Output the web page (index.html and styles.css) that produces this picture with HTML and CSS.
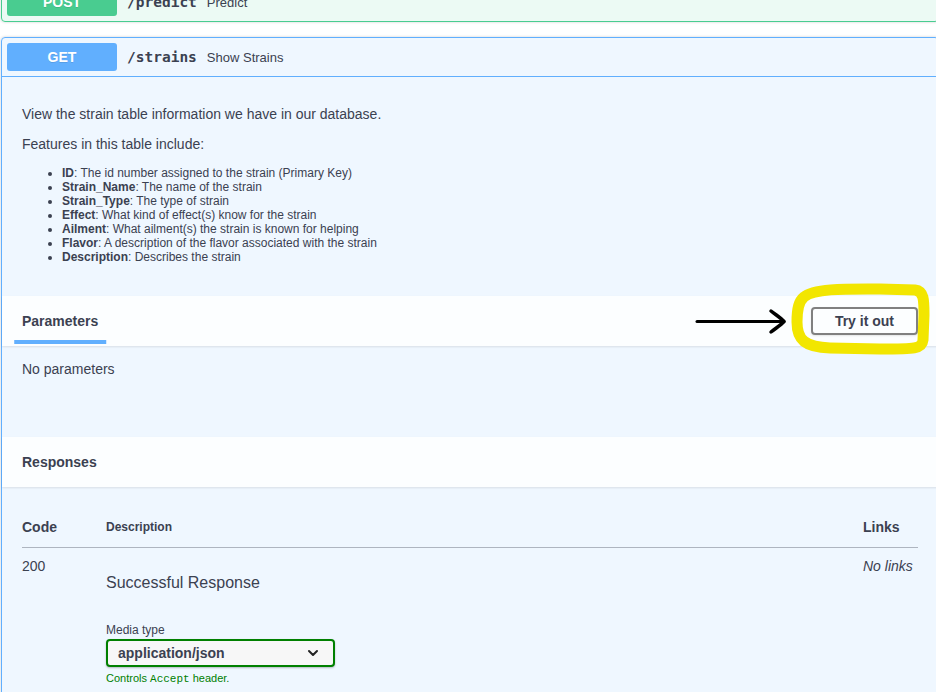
FILE: index.html
```html
<!DOCTYPE html>
<html lang="en">
<head>
<meta charset="utf-8">
<title>Swagger UI</title>
<link rel="stylesheet" href="styles.css">
</head>
<body>
<div class="page">
  <div class="opblock opblock-post">
    <div class="summary">
      <span class="method method-post">POST</span>
      <span class="path">/predict</span>
      <span class="summary-desc">Predict</span>
    </div>
  </div>

  <div class="opblock opblock-get">
    <div class="summary">
      <span class="method method-get">GET</span>
      <span class="path">/strains</span>
      <span class="summary-desc">Show Strains</span>
    </div>

    <div class="description">
      <p>View the strain table information we have in our database.</p>
      <p>Features in this table include:</p>
      <ul>
        <li><strong>ID</strong>: The id number assigned to the strain (Primary Key)</li>
        <li><strong>Strain_Name</strong>: The name of the strain</li>
        <li><strong>Strain_Type</strong>: The type of strain</li>
        <li><strong>Effect</strong>: What kind of effect(s) know for the strain</li>
        <li><strong>Ailment</strong>: What ailment(s) the strain is known for helping</li>
        <li><strong>Flavor</strong>: A description of the flavor associated with the strain</li>
        <li><strong>Description</strong>: Describes the strain</li>
      </ul>
    </div>

    <div class="section-header">
      <h4 class="tab-title"><span>Parameters</span></h4>
      <button class="try-out">Try it out</button>
      <svg class="annotation" width="246" height="80" viewBox="0 0 246 80" aria-hidden="true">
        <path d="M114,17 C124,8 160,9 190,9 L225,10 C234,11 234,20 234,35 L233,60 C232,69 225,69 190,69 L140,68 C115,67 107,60 107,42 C107,28 109,21 114,17 Z" fill="none" stroke="#f2e600" stroke-width="11" stroke-linejoin="round" stroke-linecap="round"/>
        <path d="M7,41.5 L94,41.5" fill="none" stroke="#000" stroke-width="3" stroke-linecap="round"/>
        <path d="M81,31 C86,35 91,38 94,41.5 C91,45 86,48 81,52" fill="none" stroke="#000" stroke-width="3.5" stroke-linecap="round" stroke-linejoin="round"/>
      </svg>
    </div>

    <div class="params-body">
      <p>No parameters</p>
    </div>

    <div class="section-header">
      <h4 class="section-title">Responses</h4>
    </div>

    <div class="responses-inner">
      <table class="responses-table">
        <thead>
          <tr>
            <td class="col-code head-big">Code</td>
            <td class="col-desc head-small">Description</td>
            <td class="col-links head-big">Links</td>
          </tr>
        </thead>
        <tbody>
          <tr>
            <td class="col-code status">200</td>
            <td class="col-desc">
              <p class="resp-text">Successful Response</p>
              <div class="media-label">Media type</div>
              <div class="select">
                <span>application/json</span>
                <svg width="12" height="8" viewBox="0 0 12 8" aria-hidden="true"><path d="M2,2 L6,6 L10,2" fill="none" stroke="#222" stroke-width="2" stroke-linecap="round" stroke-linejoin="round"/></svg>
              </div>
              <div class="accept-msg">Controls <code>Accept</code> header.</div>
            </td>
            <td class="col-links no-links">No links</td>
          </tr>
        </tbody>
      </table>
    </div>
  </div>
</div>
</body>
</html>
```

FILE: styles.css
```css
html, body {
  margin: 0;
  padding: 0;
  background: #fff;
  overflow: hidden;
}

body {
  font-family: "Liberation Sans", Arial, sans-serif;
  color: #3b4151;
}

.page {
  margin-top: -18px;
  padding-left: 1px;
}

.opblock {
  width: 938px;
  box-sizing: border-box;
  border: 1px solid;
  border-radius: 4px;
  box-shadow: 0 0 3px rgba(0, 0, 0, 0.19);
  margin-bottom: 15px;
}

.opblock-post {
  background: rgba(73, 204, 144, 0.1);
  border-color: #49cc90;
}

.opblock-get {
  background: rgba(97, 175, 254, 0.1);
  border-color: #61affe;
}

.summary {
  display: flex;
  align-items: center;
  padding: 5px;
}

.opblock-get .summary {
  border-bottom: 1px solid #61affe;
}

.method {
  min-width: 80px;
  padding: 6px 15px;
  font-size: 14px;
  line-height: 16px;
  font-weight: 700;
  color: #fff;
  text-align: center;
  border-radius: 3px;
  text-shadow: 0 1px 0 rgba(0, 0, 0, 0.1);
}

.method-post { background: #49cc90; }
.method-get { background: #61affe; }

.path {
  padding: 0 10px;
  font-family: "DejaVu Sans Mono", "Liberation Mono", monospace;
  font-weight: 700;
  font-size: 14.5px;
  color: #3b4151;
}

.summary-desc {
  font-size: 13px;
  color: #3b4151;
}

.description {
  padding: 15px 20px;
}

.description p {
  margin: 14px 0 0;
  font-size: 14px;
  line-height: 16px;
}

.description ul {
  margin: 14px 0 17px;
  padding-left: 40px;
  font-size: 12px;
  line-height: 14px;
}

.section-header {
  position: relative;
  display: flex;
  align-items: center;
  justify-content: space-between;
  min-height: 50px;
  box-sizing: border-box;
  padding: 8px 20px;
  background: rgba(255, 255, 255, 0.8);
  box-shadow: 0 1px 2px rgba(0, 0, 0, 0.1);
}

.tab-title,
.section-title {
  margin: 0;
  font-size: 14px;
  line-height: 16px;
  font-weight: 700;
  color: #3b4151;
}

.tab-title span {
  position: relative;
}

.tab-title span::after {
  content: "";
  position: absolute;
  left: 50%;
  bottom: -15px;
  width: 120%;
  height: 4px;
  transform: translateX(-50%);
  background: #61affe;
}

.try-out {
  font-family: "Liberation Sans", Arial, sans-serif;
  font-size: 14px;
  line-height: 16px;
  font-weight: 700;
  color: #3b4151;
  padding: 4px 22px;
  border: 2px solid #808080;
  border-radius: 4px;
  background: transparent;
  box-shadow: 0 1px 2px rgba(0, 0, 0, 0.1);
}

.annotation {
  position: absolute;
  left: 688px;
  top: -16px;
  pointer-events: none;
}

.params-body {
  padding: 15px 20px 60px;
}

.params-body p {
  margin: 0;
  font-size: 14px;
  line-height: 16px;
}

.responses-inner {
  padding: 20px;
}

.responses-table {
  width: 100%;
  border-collapse: collapse;
}

.responses-table td {
  padding: 0;
  vertical-align: top;
  text-align: left;
}

.responses-table thead td {
  padding: 12px 0;
  line-height: 16px;
  vertical-align: middle;
  border-bottom: 1px solid rgba(59, 65, 81, 0.2);
}

.head-big {
  font-size: 14px;
  font-weight: 700;
}

.head-small {
  font-size: 12px;
  font-weight: 700;
}

.col-code { width: 84px; }
.col-links { width: 55px; }

.responses-table tbody td {
  padding-top: 10px;
}

.status {
  font-size: 14px;
  line-height: 16px;
}

.no-links {
  font-size: 14px;
  line-height: 16px;
  font-style: italic;
}

.resp-text {
  margin: 16px 0 0;
  font-size: 16px;
  line-height: 18px;
}

.media-label {
  margin-top: 31px;
  font-size: 12px;
  line-height: 14px;
}

.select {
  margin-top: 2px;
  width: 229px;
  height: 28px;
  box-sizing: border-box;
  display: flex;
  align-items: center;
  justify-content: space-between;
  padding: 0 14px 0 10px;
  border: 2px solid #008000;
  border-radius: 4px;
  background: #f7f7f7;
  box-shadow: 0 1px 2px 0 rgba(0, 0, 0, 0.25);
  font-size: 14px;
  font-weight: 700;
  color: #3b4151;
}

.accept-msg {
  margin-top: 5px;
  font-size: 11px;
  line-height: 12px;
  color: #008000;
}

.accept-msg code {
  font-family: "Liberation Mono", monospace;
  font-size: 11px;
}
```
